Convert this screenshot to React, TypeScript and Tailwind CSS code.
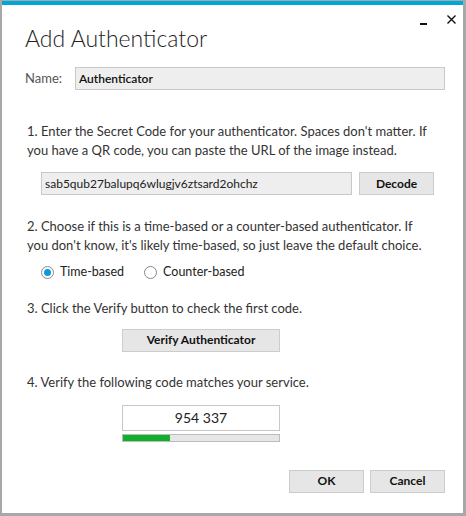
import { useState } from "react";

function Radio({ checked, label, onClick }: { checked: boolean; label: string; onClick: () => void }) {
  return (
    <label className="flex items-center gap-[6px] cursor-default" onClick={onClick}>
      <span className="w-[13px] h-[13px] rounded-full border border-[#8a8a8a] bg-white flex items-center justify-center">
        {checked && <span className="w-[7px] h-[7px] rounded-full bg-[#0a9bd8]" />}
      </span>
      <span className="text-[12.5px] text-[#222]">{label}</span>
    </label>
  );
}

function Btn({ children, className = "" }: { children: React.ReactNode; className?: string }) {
  return (
    <button
      className={
        "h-[23px] border border-[#cccccc] bg-[#e6e6e6] text-[12px] font-bold text-[#111] flex items-center justify-center " +
        className
      }
    >
      {children}
    </button>
  );
}

export default function App() {
  const [mode, setMode] = useState<"time" | "counter">("time");
  const [name, setName] = useState("Authenticator");
  const [secret, setSecret] = useState("sab5qub27balupq6wlugjv6ztsard2ohchz");

  return (
    <div
      className="w-[466px] h-[516px] bg-[#a8a8a8] pl-[2px] pr-[3px] pb-[3px] pt-[1px] flex flex-col"
      style={{ fontFamily: 'Lato, "Open Sans", sans-serif' }}
    >
      <div className="h-[4px] bg-[#00a8d8]" />
      <div className="flex-1 bg-white flex flex-col relative">
        {/* window buttons */}
        <div className="absolute right-[7px] top-[6px] flex items-center gap-[20px] text-[#111]">
          <span className="w-[7px] h-[2px] bg-[#111] mt-[12px]" />
          <svg width="9" height="9" viewBox="0 0 9 9" className="mt-[2px]">
            <path d="M0.5 0.5 L8.5 8.5 M8.5 0.5 L0.5 8.5" stroke="#111" strokeWidth="1.4" />
          </svg>
        </div>

        <div className="pl-[23px] pr-[18px] pt-[16px]">
          <h1 className="text-[23px] font-light text-[#222] leading-[34px]">Add Authenticator</h1>

          <div className="mt-[12px] flex items-center">
            <span className="w-[50px] text-[13px] text-[#555]">Name:</span>
            <input
              value={name}
              onChange={(e) => setName(e.target.value)}
              className="flex-1 h-[23px] border border-[#c8c8c8] bg-[#eeeeee] px-[3px] text-[12px] text-[#111] font-semibold outline-none"
            />
          </div>

          <p className="mt-[32px] pl-[2px] text-[13px] leading-[19px] text-[#333] whitespace-nowrap">
            1. Enter the Secret Code for your authenticator. Spaces don't matter. If
            <br />
            you have a QR code, you can paste the URL of the image instead.
          </p>

          <div className="mt-[12px] pl-[16px] flex items-center gap-[7px]">
            <input
              value={secret}
              onChange={(e) => setSecret(e.target.value)}
              className="w-[311px] h-[23px] border border-[#c8c8c8] bg-[#eeeeee] px-[3px] text-[12px] text-[#222] outline-none"
            />
            <Btn className="w-[75px]">Decode</Btn>
          </div>

          <p className="mt-[22px] pl-[2px] text-[13px] leading-[19px] text-[#333] whitespace-nowrap">
            2. Choose if this is a time-based or a counter-based authenticator. If
            <br />
            you don't know, it's likely time-based, so just leave the default choice.
          </p>

          <div className="mt-[8px] pl-[16px] flex items-center gap-[20px]">
            <Radio checked={mode === "time"} label="Time-based" onClick={() => setMode("time")} />
            <Radio checked={mode === "counter"} label="Counter-based" onClick={() => setMode("counter")} />
          </div>

          <p className="mt-[17px] pl-[2px] text-[13px] leading-[19px] text-[#333]">
            3. Click the Verify button to check the first code.
          </p>

          <div className="mt-[11px] pl-[97px]">
            <Btn className="w-[158px]">Verify Authenticator</Btn>
          </div>

          <p className="mt-[21px] pl-[2px] text-[13px] leading-[19px] text-[#333]">
            4. Verify the following code matches your service.
          </p>

          <div className="mt-[13px] pl-[97px] flex flex-col gap-[3px]">
            <div className="w-[158px] h-[26px] border border-[#c8c8c8] flex items-center justify-center text-[14px] text-[#222]">
              954 337
            </div>
            <div className="w-[158px] h-[8px] border border-[#bcbcbc] bg-[#e6e6e6]">
              <div className="h-full bg-[#0fb02c]" style={{ width: "30%" }} />
            </div>
          </div>

          <div className="mt-[28px] flex justify-end gap-[6px]">
            <Btn className="w-[75px]">OK</Btn>
            <Btn className="w-[75px]">Cancel</Btn>
          </div>
        </div>
      </div>
    </div>
  );
}
